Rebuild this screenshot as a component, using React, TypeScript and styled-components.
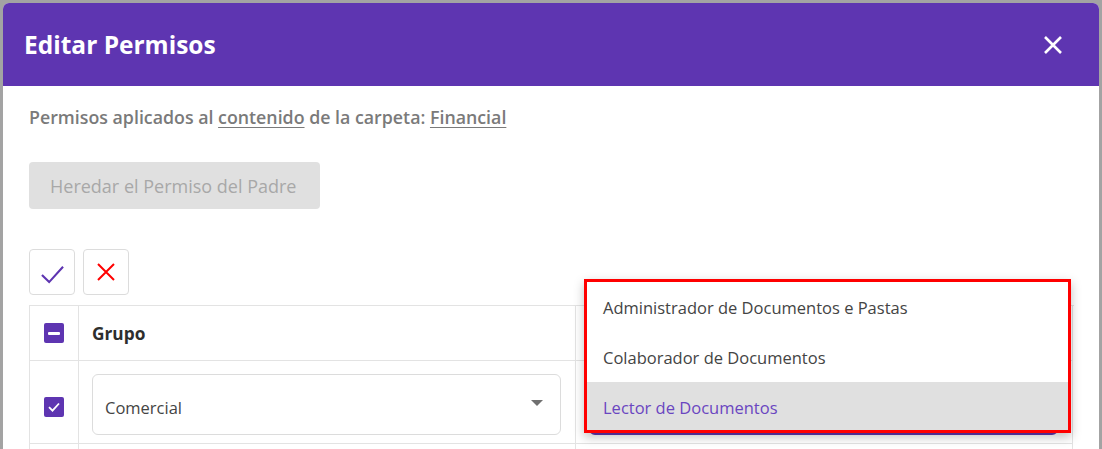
import React from "react";
import styled, { createGlobalStyle } from "styled-components";

const GlobalStyle = createGlobalStyle`
  html, body { margin: 0; padding: 0; }
  body {
    background: #a3a3a3;
    font-family: "Open Sans", Lato, sans-serif;
    overflow: hidden;
  }
`;

const Modal = styled.div`
  margin: 3px 3px 0 3px;
  height: 446px;
  background: #fff;
  border-radius: 6px 6px 0 0;
  overflow: hidden;
  display: flex;
  flex-direction: column;
`;

const Header = styled.header`
  flex: none;
  height: 83px;
  background: #5e35b1;
  display: flex;
  align-items: center;
  justify-content: space-between;
  padding: 0 37px 0 21px;
`;

const Title = styled.h1`
  margin: 0;
  color: #fff;
  font-size: 24.5px;
  font-weight: 700;
`;

const CloseButton = styled.button`
  background: none;
  border: none;
  padding: 0;
  display: flex;
  color: #fff;
  cursor: pointer;
`;

const Body = styled.div`
  padding: 21px 26px 0 26px;
  display: flex;
  flex-direction: column;
  align-items: flex-start;
`;

const Subtitle = styled.p`
  margin: 0;
  font-size: 17.8px;
  line-height: 20px;
  font-weight: 600;
  color: #7a7a7a;
`;

const Link = styled.span`
  text-decoration: underline;
  text-underline-offset: 3px;
`;

const InheritButton = styled.button`
  margin-top: 35px;
  height: 47px;
  width: 291px;
  border: none;
  border-radius: 4px;
  background: #e0e0e0;
  color: #a8a8a8;
  font-family: "Open Sans", sans-serif;
  font-size: 18px;
  font-weight: 400;
  text-align: left;
  padding: 0 0 0 21px;
`;

const Toolbar = styled.div`
  margin-top: 40px;
  display: flex;
  gap: 8px;
`;

const IconButton = styled.button`
  width: 46px;
  height: 46px;
  border: 1px solid #dcdcdc;
  border-radius: 4px;
  background: #fff;
  display: flex;
  align-items: center;
  justify-content: center;
  padding: 0;
`;

const Table = styled.div`
  margin-top: 10px;
  width: 1044px;
  display: grid;
  grid-template-columns: 49px 497px 497px;
  border-top: 1px solid #e3e3e3;
  border-left: 1px solid #e3e3e3;
`;

const Cell = styled.div<{ $h: number; $pad?: string }>`
  position: relative;
  box-sizing: border-box;
  height: ${(p) => p.$h}px;
  border-right: 1px solid #e3e3e3;
  border-bottom: 1px solid #e3e3e3;
  padding: ${(p) => p.$pad ?? "0"};
  display: flex;
  align-items: center;
`;

const CheckCell = styled(Cell)`
  justify-content: center;
`;

const HeadLabel = styled.span`
  font-size: 17.3px;
  font-weight: 700;
  color: #2e2e2e;
`;

const Checkbox = styled.span`
  width: 20px;
  height: 20px;
  border-radius: 2px;
  background: #5e35b1;
  display: flex;
  align-items: center;
  justify-content: center;
`;

const Dash = styled.span`
  width: 12px;
  height: 3px;
  background: #fff;
  border-radius: 1px;
`;

const SelectBox = styled.div<{ $focused?: boolean }>`
  box-sizing: border-box;
  flex: 1;
  height: 61px;
  border: 1px solid ${(p) => (p.$focused ? "#5e35b1" : "#dcdcdc")};
  border-width: ${(p) => (p.$focused ? "2px" : "1px")};
  border-radius: 6px;
  display: flex;
  align-items: center;
  justify-content: space-between;
  padding: 6px 17px 0 12px;
`;

const SelectValue = styled.span`
  font-size: 16.5px;
  color: #444;
`;

const Arrow = styled.span`
  width: 0;
  height: 0;
  margin-bottom: 8px;
  border-left: 6px solid transparent;
  border-right: 6px solid transparent;
  border-top: 6px solid #707070;
`;

const Menu = styled.ul`
  position: absolute;
  top: -82px;
  left: 8px;
  width: 487px;
  box-sizing: border-box;
  margin: 0;
  padding: 0;
  list-style: none;
  background: #fff;
  border: 3px solid #ff0000;
  box-shadow: 0 4px 10px rgba(0, 0, 0, 0.25);
  z-index: 2;
`;

const MenuItem = styled.li<{ $active?: boolean }>`
  height: ${(p) => (p.$active ? 48 : 50)}px;
  box-sizing: border-box;
  display: flex;
  align-items: center;
  padding: ${(p) => (p.$active ? "3px 0 0 16px" : "0 0 0 16px")};
  font-size: 16.5px;
  color: ${(p) => (p.$active ? "#6a46c0" : "#444")};
  background: ${(p) => (p.$active ? "#e0e0e0" : "transparent")};
`;

const CheckIcon = ({ color, size }: { color: string; size: number }) => (
  <svg width={size} height={size} viewBox="0 0 24 24">
    <path d="M1 14.5 L8.5 22 L23 6" fill="none" stroke={color} strokeWidth="2.2" />
  </svg>
);

const CrossIcon = ({ color, size, w }: { color: string; size: number; w: number }) => (
  <svg width={size} height={size} viewBox="0 0 18 18">
    <path d="M1 1 L17 17 M17 1 L1 17" fill="none" stroke={color} strokeWidth={w} />
  </svg>
);

const TickMark = () => (
  <svg width="14" height="14" viewBox="0 0 14 14">
    <path d="M2 7.2 L5.5 10.7 L12 3.5" fill="none" stroke="#fff" strokeWidth="1.8" />
  </svg>
);

export default function App() {
  return (
    <>
      <GlobalStyle />
      <Modal>
        <Header>
          <Title>Editar Permisos</Title>
          <CloseButton aria-label="Cerrar">
            <CrossIcon color="#fff" size={18} w={2.6} />
          </CloseButton>
        </Header>
        <Body>
          <Subtitle>
            Permisos aplicados al <Link>contenido</Link> de la carpeta: <Link>Financial</Link>
          </Subtitle>
          <InheritButton disabled>Heredar el Permiso del Padre</InheritButton>
          <Toolbar>
            <IconButton aria-label="Aceptar">
              <CheckIcon color="#5e35b1" size={23} />
            </IconButton>
            <IconButton aria-label="Cancelar">
              <CrossIcon color="#ff0000" size={18} w={2} />
            </IconButton>
          </Toolbar>
          <Table>
            <CheckCell $h={55}>
              <Checkbox>
                <Dash />
              </Checkbox>
            </CheckCell>
            <Cell $h={55} $pad="0 0 0 13px">
              <HeadLabel>Grupo</HeadLabel>
            </Cell>
            <Cell $h={55} />

            <CheckCell $h={83} $pad="9px 0 0 0">
              <Checkbox>
                <TickMark />
              </Checkbox>
            </CheckCell>
            <Cell $h={83} $pad="4px 14px 0 13px">
              <SelectBox>
                <SelectValue>Comercial</SelectValue>
                <Arrow />
              </SelectBox>
            </Cell>
            <Cell $h={83} $pad="4px 14px 0 13px">
              <SelectBox $focused>
                <SelectValue>Lector de Documentos</SelectValue>
                <Arrow />
              </SelectBox>
              <Menu>
                <MenuItem>Administrador de Documentos e Pastas</MenuItem>
                <MenuItem>Colaborador de Documentos</MenuItem>
                <MenuItem $active>Lector de Documentos</MenuItem>
              </Menu>
            </Cell>

            <CheckCell $h={83} />
            <Cell $h={83} />
            <Cell $h={83} />
          </Table>
        </Body>
      </Modal>
    </>
  );
}
